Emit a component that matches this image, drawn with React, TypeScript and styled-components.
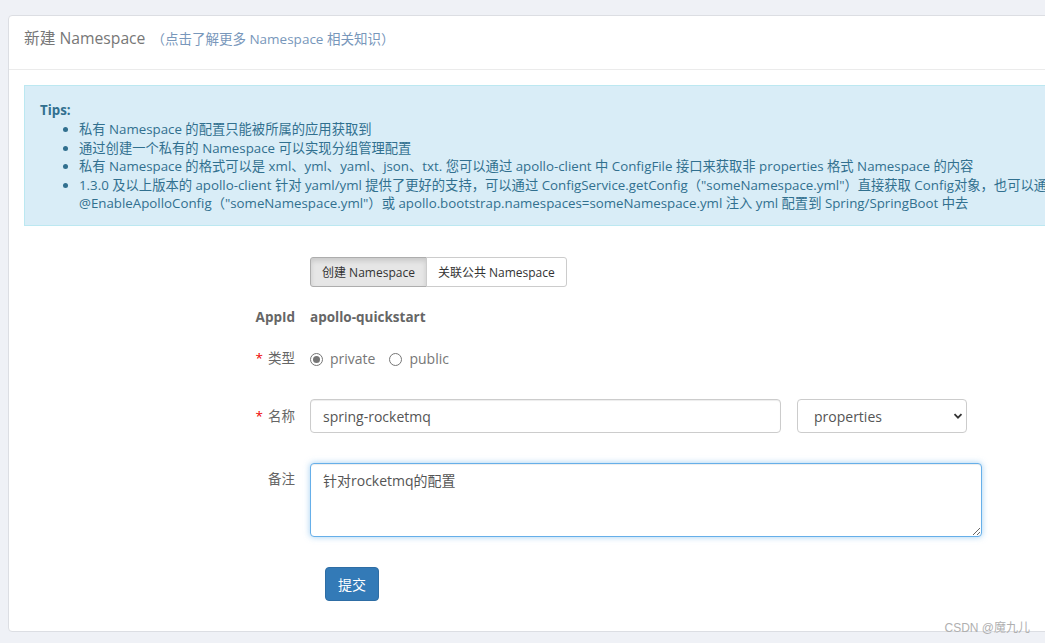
import { useState } from "react";
import styled, { createGlobalStyle } from "styled-components";

const GlobalStyle = createGlobalStyle`
  html, body {
    margin: 0;
    padding: 0;
    background: #eff1f6;
    overflow: hidden;
  }
  body {
    font-family: "Open Sans", "Noto Sans CJK SC", sans-serif;
    font-size: 14px;
    color: #555;
  }
`;

const Page = styled.div`
  position: relative;
  width: 1045px;
  height: 643px;
  padding: 15px 0 0 8px;
  box-sizing: border-box;
`;

const Card = styled.div`
  width: 1100px;
  height: 617px;
  box-sizing: border-box;
  background: #fff;
  border: 1px solid #dcdee3;
  border-radius: 4px;
  overflow: hidden;
`;

const CardHeader = styled.div`
  height: 54px;
  box-sizing: border-box;
  border-bottom: 1px solid #ebebeb;
  padding: 10px 15px 0 15px;
  display: flex;
  align-items: baseline;
`;

const Title = styled.span`
  font-size: 15.7px;
  color: #777;
  line-height: 24px;
`;

const TitleHint = styled.span`
  font-size: 13.5px;
  color: #7897bb;
  margin-left: 6px;
`;

const CardBody = styled.div`
  padding: 15px 15px 0 15px;
`;

const Alert = styled.div`
  background: #d9edf7;
  border: 1px solid #bce8f1;
  color: #31708f;
  padding: 14px 15px 12px 15px;
  font-size: 13.3px;
  line-height: 18.5px;
`;

const AlertTitle = styled.div`
  font-weight: 700;
  line-height: 20px;
`;

const TipList = styled.ul`
  margin: 0;
  padding-left: 39px;
  white-space: nowrap;

  li {
    list-style: disc;
  }
`;

const Form = styled.div`
  display: flex;
  flex-direction: column;
  padding-bottom: 30px;
`;

const Row = styled.div<{ $top: number }>`
  display: grid;
  grid-template-columns: 271px 1fr;
  column-gap: 15px;
  margin-top: ${(p) => p.$top}px;
  align-items: start;
`;

const Label = styled.div<{ $pad?: number; $bold?: boolean }>`
  text-align: right;
  font-size: 13.5px;
  line-height: 20px;
  padding-top: ${(p) => p.$pad ?? 0}px;
  color: #666;
  font-weight: ${(p) => (p.$bold ? 700 : 400)};
`;

const Required = styled.span`
  color: #e00;
  margin-right: 5px;
`;

const Controls = styled.div`
  display: flex;
  align-items: center;
  gap: 16px;
`;

const BtnGroup = styled.div`
  display: flex;
`;

const ToggleBtn = styled.button<{ $active?: boolean }>`
  height: 30px;
  padding: 0 11px;
  font-family: inherit;
  font-size: 12px;
  color: #333;
  cursor: pointer;
  background: ${(p) => (p.$active ? "#e6e6e6" : "#fff")};
  border: 1px solid ${(p) => (p.$active ? "#adadad" : "#ccc")};
  box-shadow: ${(p) => (p.$active ? "inset 0 3px 5px rgba(0,0,0,.125)" : "none")};
  border-radius: 0;
  &:first-child {
    border-radius: 3px 0 0 3px;
  }
  &:last-child {
    border-radius: 0 3px 3px 0;
    margin-left: -1px;
  }
`;

const StaticText = styled.div`
  font-weight: 700;
  font-size: 13.5px;
  line-height: 20px;
  color: #666;
`;

const RadioLabel = styled.label`
  display: inline-flex;
  align-items: center;
  gap: 7px;
  line-height: 20px;
  color: #777;
  font-size: 14px;
  margin-right: 14px;
`;

const RadioDot = styled.span<{ $checked?: boolean }>`
  width: 13px;
  height: 13px;
  border-radius: 50%;
  border: 1px solid #767676;
  box-sizing: border-box;
  display: inline-flex;
  align-items: center;
  justify-content: center;
  &::after {
    content: "";
    width: 7px;
    height: 7px;
    border-radius: 50%;
    background: ${(p) => (p.$checked ? "#767676" : "transparent")};
  }
`;

const TextInput = styled.input`
  width: 471px;
  height: 34px;
  box-sizing: border-box;
  border: 1px solid #ccc;
  border-radius: 4px;
  padding: 6px 12px;
  font-family: inherit;
  font-size: 14px;
  color: #555;
  box-shadow: inset 0 1px 1px rgba(0, 0, 0, 0.075);
  outline: none;
`;

const SelectBox = styled.div`
  width: 170px;
  height: 34px;
  box-sizing: border-box;
  border: 1px solid #ccc;
  border-radius: 4px;
  padding: 0 3px 0 16px;
  display: flex;
  align-items: center;
  justify-content: space-between;
  color: #555;
  font-size: 14px;
`;

const TextArea = styled.textarea`
  width: 672px;
  height: 74px;
  box-sizing: border-box;
  border: 1px solid #66afe9;
  border-radius: 4px;
  padding: 6px 12px;
  font-family: inherit;
  font-size: 14px;
  color: #555;
  resize: vertical;
  outline: none;
  box-shadow: inset 0 1px 1px rgba(0, 0, 0, 0.075), 0 0 6px rgba(102, 175, 233, 0.6);
`;

const SubmitBtn = styled.button`
  margin-left: 15px;
  width: 54px;
  height: 34px;
  background: #337ab7;
  border: 1px solid #2e6da4;
  border-radius: 4px;
  color: #fff;
  font-family: inherit;
  font-size: 14px;
  cursor: pointer;
`;

const Watermark = styled.div`
  position: absolute;
  right: 15px;
  bottom: 8px;
  font-family: "Liberation Sans", "Noto Sans CJK SC", sans-serif;
  font-size: 12px;
  color: #b0b0b0;
`;

const tips = [
  "私有 Namespace 的配置只能被所属的应用获取到",
  "通过创建一个私有的 Namespace 可以实现分组管理配置",
  "私有 Namespace 的格式可以是 xml、yml、yaml、json、txt. 您可以通过 apollo-client 中 ConfigFile 接口来获取非 properties 格式 Namespace 的内容",
];

export default function App() {
  const [mode, setMode] = useState<"create" | "link">("create");
  const [scope, setScope] = useState<"private" | "public">("private");
  const [name, setName] = useState("spring-rocketmq");
  const [comment, setComment] = useState("针对rocketmq的配置");

  return (
    <>
      <GlobalStyle />
      <Page>
        <Card>
          <CardHeader>
            <Title>新建 Namespace</Title>
            <TitleHint>（点击了解更多 Namespace 相关知识）</TitleHint>
          </CardHeader>
          <CardBody>
            <Alert>
              <AlertTitle>Tips:</AlertTitle>
              <TipList>
                {tips.map((t) => (
                  <li key={t}>{t}</li>
                ))}
                <li>
                  1.3.0 及以上版本的 apollo-client 针对 yaml/yml 提供了更好的支持，可以通过 ConfigService.getConfig（"someNamespace.yml"）直接获取 Config对象，也可以通过
                  <br />
                  @EnableApolloConfig（"someNamespace.yml"）或 apollo.bootstrap.namespaces=someNamespace.yml 注入 yml 配置到 Spring/SpringBoot 中去
                </li>
              </TipList>
            </Alert>
            <Form>
              <Row $top={31}>
                <div />
                <BtnGroup>
                  <ToggleBtn $active={mode === "create"} onClick={() => setMode("create")}>
                    创建 Namespace
                  </ToggleBtn>
                  <ToggleBtn $active={mode === "link"} onClick={() => setMode("link")}>
                    关联公共 Namespace
                  </ToggleBtn>
                </BtnGroup>
              </Row>
              <Row $top={20}>
                <Label $bold>AppId</Label>
                <StaticText>apollo-quickstart</StaticText>
              </Row>
              <Row $top={21}>
                <Label>
                  <Required>*</Required>类型
                </Label>
                <Controls>
                  <div>
                    <RadioLabel onClick={() => setScope("private")}>
                      <RadioDot $checked={scope === "private"} />
                      private
                    </RadioLabel>
                    <RadioLabel onClick={() => setScope("public")}>
                      <RadioDot $checked={scope === "public"} />
                      public
                    </RadioLabel>
                  </div>
                </Controls>
              </Row>
              <Row $top={30}>
                <Label $pad={7}>
                  <Required>*</Required>名称
                </Label>
                <Controls>
                  <TextInput value={name} onChange={(e) => setName(e.target.value)} />
                  <SelectBox>
                    <span>properties</span>
                    <svg width="10" height="10" viewBox="0 0 10 10">
                      <path d="M1.5 3.2 L5 6.7 L8.5 3.2" fill="none" stroke="#333" strokeWidth="1.8" />
                    </svg>
                  </SelectBox>
                </Controls>
              </Row>
              <Row $top={30}>
                <Label $pad={6}>备注</Label>
                <TextArea value={comment} onChange={(e) => setComment(e.target.value)} />
              </Row>
              <Row $top={30}>
                <div />
                <div>
                  <SubmitBtn>提交</SubmitBtn>
                </div>
              </Row>
            </Form>
          </CardBody>
        </Card>
        <Watermark>CSDN @魔九儿</Watermark>
      </Page>
    </>
  );
}
